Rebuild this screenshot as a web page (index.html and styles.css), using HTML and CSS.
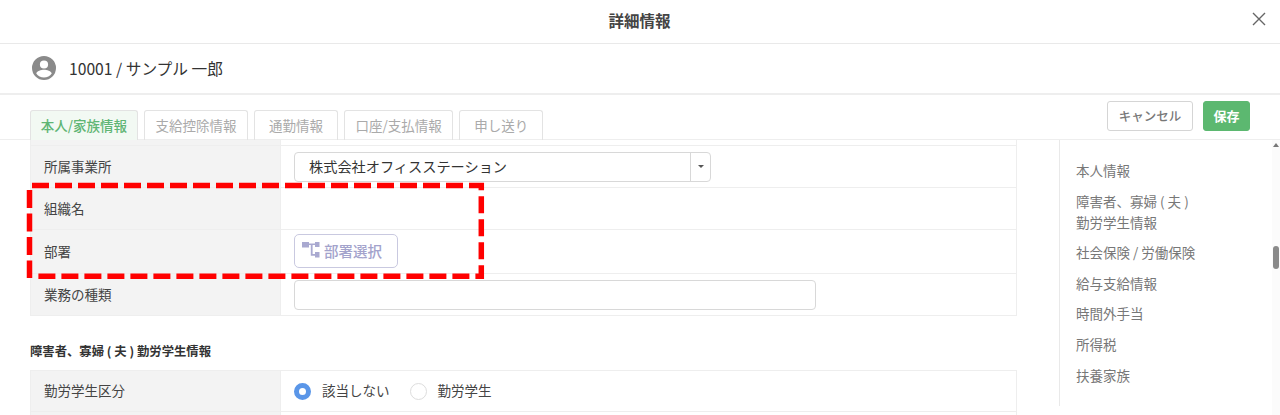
FILE: index.html
```html
<!DOCTYPE html>
<html lang="ja">
<head>
<meta charset="utf-8">
<title>詳細情報</title>
<link rel="stylesheet" href="styles.css">
</head>
<body>
<header class="modal-head">
  <h1 class="modal-title">詳細情報</h1>
  <svg class="close-icon" viewBox="0 0 14 14" aria-hidden="true"><path d="M1 1L13 13M13 1L1 13"/></svg>
</header>
<div class="person">
  <svg class="person-icon" viewBox="0 0 24 24" aria-hidden="true"><path d="M12 0a12 12 0 1 0 0 24a12 12 0 0 0 0-24zm0 4.4a4.1 4.1 0 1 1 0 8.2a4.1 4.1 0 0 1 0-8.2zm0 17.2c-3.2 0-6-1.6-7.7-4c.1-2.5 5.1-3.9 7.7-3.9s7.6 1.4 7.7 3.9c-1.7 2.4-4.5 4-7.7 4z"/></svg>
  <span class="person-name">10001 / サンプル 一郎</span>
</div>
<div class="tabbar">
  <nav class="tabs">
    <a class="tab tab-active">本人/家族情報</a>
    <a class="tab">支給控除情報</a>
    <a class="tab">通勤情報</a>
    <a class="tab">口座/支払情報</a>
    <a class="tab">申し送り</a>
  </nav>
  <div class="actions">
    <button class="btn btn-cancel">キャンセル</button>
    <button class="btn btn-save">保存</button>
  </div>
</div>
<main class="body">
  <section class="content">
    <div class="table">
      <div class="row row-stub"><div class="label"></div><div class="value"></div></div>
      <div class="row row-42">
        <div class="label">所属事業所</div>
        <div class="value">
          <div class="select">
            <span class="select-text">株式会社オフィスステーション</span>
            <span class="select-caret"><i class="caret"></i></span>
          </div>
        </div>
      </div>
      <div class="row row-42"><div class="label">組織名</div><div class="value"></div></div>
      <div class="row row-44">
        <div class="label">部署</div>
        <div class="value">
          <button class="org-btn">
            <svg class="org-icon" viewBox="0 0 18 16" aria-hidden="true"><path d="M0 0h7v5.5H0zM13 0h4.5v5H13zM13 10h4.5v5.5H13zM7 1.6h6v1.5h-2.4v9h2.4v1.6H8.8V3.1H7z"/></svg>
            部署選択
          </button>
        </div>
      </div>
      <div class="row row-42">
        <div class="label">業務の種類</div>
        <div class="value"><div class="input"></div></div>
      </div>
    </div>
    <h2 class="section-title">障害者、寡婦 ( 夫 ) 勤労学生情報</h2>
    <div class="table table-top">
      <div class="row row-41">
        <div class="label">勤労学生区分</div>
        <div class="value radios">
          <span class="radio radio-on"></span><span class="radio-text">該当しない</span>
          <span class="radio"></span><span class="radio-text">勤労学生</span>
        </div>
      </div>
      <div class="row row-rest"><div class="label"></div><div class="value"></div></div>
    </div>
  </section>
  <aside class="side">
    <ul class="side-nav">
      <li>本人情報</li>
      <li>障害者、寡婦 ( 夫 )<br>勤労学生情報</li>
      <li>社会保険 / 労働保険</li>
      <li>給与支給情報</li>
      <li>時間外手当</li>
      <li>所得税</li>
      <li>扶養家族</li>
    </ul>
  </aside>
  <div class="scrollbar">
    <i class="scroll-up"></i>
    <i class="scroll-thumb"></i>
  </div>
  <svg class="highlight" viewBox="0 0 500 150" aria-hidden="true">
    <path class="dash-main" d="M32 45.5H481.3V136.3H32.7"/>
    <path class="dash-left" d="M29.5 50V138"/>
  </svg>
</main>
</body>
</html>
```
FILE: styles.css
```css
* { box-sizing: border-box; }
html, body { margin: 0; padding: 0; }
body {
  width: 1280px;
  height: 415px;
  overflow: hidden;
  background: #fff;
  color: #333;
  font-family: "Noto Sans CJK JP", "Noto Sans", sans-serif;
  font-size: 13.5px;
  display: flex;
  flex-direction: column;
}
.modal-head {
  height: 44px;
  flex: none;
  border-bottom: 1px solid #e9e9e9;
  display: flex;
  align-items: center;
  justify-content: center;
  position: relative;
}
.modal-title {
  margin: 0 1px 3px 0;
  font-size: 15.5px;
  font-weight: 700;
  color: #444;
}
.close-icon {
  position: absolute;
  right: 14px;
  top: 12px;
  width: 14px;
  height: 14px;
  fill: none;
  stroke: #666;
  stroke-width: 1.4;
}
.person {
  height: 51px;
  flex: none;
  border-bottom: 2px solid #eee;
  display: flex;
  align-items: center;
  padding: 0 0 1px 32px;
  gap: 13px;
}
.person-icon { width: 24px; height: 24px; fill: #8a8a8a; }
.person-name { font-size: 15.7px; color: #333; }
.tabbar {
  height: 45px;
  flex: none;
  border-bottom: 1px solid #eee;
  display: flex;
  justify-content: space-between;
  padding: 0 30px;
}
.tabs { display: flex; gap: 6px; padding-top: 15px; }
.tab {
  min-width: 84px;
  height: 30px;
  border: 1px solid #e3e3e3;
  border-bottom: 0;
  border-radius: 3px 3px 0 0;
  color: #aaa;
  font-size: 13.5px;
  line-height: 28px;
  text-align: center;
  padding: 0 10.5px;
}
.tab-active {
  background: #f2f9f3;
  color: #5fb574;
  font-weight: 500;
  width: 108px;
  padding: 0;
}
.actions { display: flex; gap: 10px; padding-top: 6px; }
.btn {
  height: 30px;
  font-family: inherit;
  font-size: 12.5px;
  border-radius: 3px;
  padding: 0 0 2px;
}
.btn-cancel {
  width: 86px;
  background: #fff;
  border: 1px solid #d5d5d5;
  color: #777;
  font-weight: 500;
}
.btn-save {
  width: 47px;
  background: #5cb870;
  border: 1px solid #5cb870;
  color: #fff;
  font-weight: 700;
  font-size: 13px;
}
.body {
  flex: 1;
  display: flex;
  position: relative;
  min-height: 0;
}
.content {
  width: 1059px;
  flex: none;
  padding: 0 42px 0 30px;
}
.table {
  border-right: 1px solid #eee;
  border-left: 1px solid #eee;
}
.table-top { border-top: 1px solid #eee; }
.row {
  display: grid;
  grid-template-columns: 250px 1fr;
  border-bottom: 1px solid #eee;
}
.row-stub { height: 6px; }
.row-42 { height: 42px; }
.row-44 { height: 44px; }
.row-41 { height: 41px; }
.row-rest { height: 20px; }
.label {
  background: #f3f3f3;
  padding: 0 0 2px 13px;
  display: flex;
  align-items: center;
  color: #444;
  border-right: 1px solid #eee;
}
.value {
  padding-left: 13px;
  display: flex;
  align-items: center;
  min-width: 0;
}
.select {
  width: 417px;
  height: 30px;
  margin-top: 1px;
  border: 1px solid #d8d8d8;
  border-radius: 4px;
  display: flex;
  align-items: center;
  justify-content: space-between;
  padding: 0 0 0 14px;
}
.select-text { color: #333; font-size: 14.2px; margin-bottom: 2px; }
.select-caret {
  width: 20px;
  height: 100%;
  border-left: 1px solid #d8d8d8;
  display: flex;
  align-items: center;
  justify-content: center;
}
.caret {
  border-top: 3px solid #555;
  border-left: 3px solid transparent;
  border-right: 3px solid transparent;
  margin-bottom: 2px;
}
.org-btn {
  width: 104px;
  height: 34px;
  background: #fff;
  border: 1px solid #c9c9e0;
  border-radius: 5px;
  color: #a3a3cc;
  font-family: inherit;
  font-size: 14.5px;
  font-weight: 500;
  display: flex;
  align-items: center;
  gap: 4px;
  padding: 0 0 2px 7px;
  margin-bottom: 1px;
}
.org-icon { width: 18px; height: 16px; fill: #a9a9d0; }
.input {
  width: 522px;
  height: 30px;
  border: 1px solid #d8d8d8;
  border-radius: 4px;
}
.section-title {
  margin: 0;
  height: 54px;
  padding-top: 26px;
  font-size: 12.35px;
  line-height: 18px;
  font-weight: 700;
  color: #333;
}
.radios { gap: 0; }
.radio {
  width: 17px;
  height: 17px;
  border: 1px solid #ddd;
  border-radius: 50%;
  background: #fff;
  margin-right: 11px;
}
.radio-on { border: 5px solid #5a96e8; }
.radio-text { color: #444; margin-right: 20px; margin-bottom: 3px; }
.side {
  width: 213px;
  flex: none;
  height: 266px;
  border-left: 1px solid #e9e9e9;
  padding: 20px 0 0 16px;
}
.side-nav {
  list-style: none;
  margin: 0;
  padding: 0;
  color: #777;
  line-height: 21px;
}
.side-nav li { margin-bottom: 9.6px; }
.scrollbar {
  width: 8px;
  flex: none;
  background: #fbfbfb;
  position: relative;
}
.scroll-up {
  position: absolute;
  top: 3px;
  left: 1px;
  border-bottom: 4px solid #777;
  border-left: 3px solid transparent;
  border-right: 3px solid transparent;
}
.scroll-thumb {
  position: absolute;
  top: 106px;
  left: 1px;
  width: 6px;
  height: 23px;
  border-radius: 3px;
  background: #8a8a8a;
}
.highlight {
  position: absolute;
  left: 0;
  top: 0;
  width: 500px;
  height: 150px;
  fill: none;
  stroke: #f00;
  stroke-width: 5.5;
}
.dash-main { stroke-dasharray: 17 6; }
.dash-left { stroke-dasharray: 18 5.5; }
```
